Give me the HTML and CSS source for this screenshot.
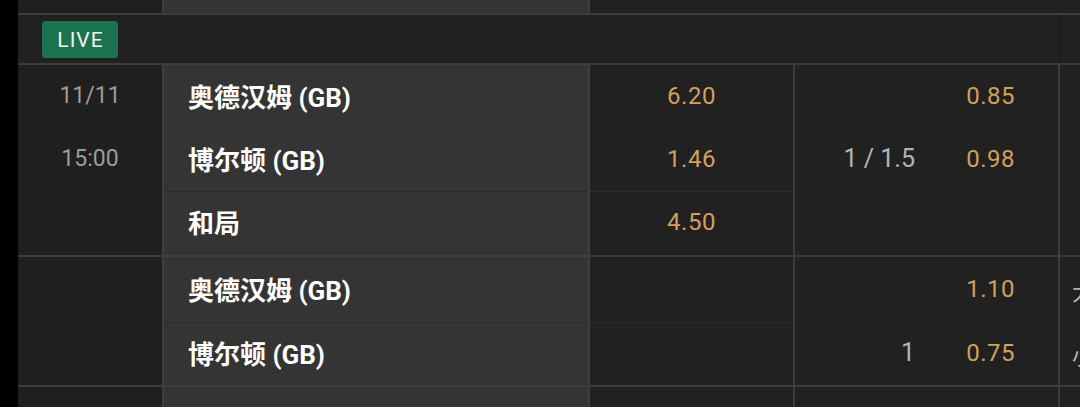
FILE: index.html
```html
<!DOCTYPE html>
<html lang="zh">
<head>
<meta charset="utf-8">
<title>Odds</title>
<link rel="stylesheet" href="styles.css">
</head>
<body>
<div class="page">
  <div class="block top">
    <div class="c-date"></div>
    <div class="c-team"></div>
    <div class="c-odds"></div>
    <div class="c-hcp"></div>
    <div class="c-rest"></div>
  </div>

  <div class="header">
    <span class="live">LIVE</span>
    <div class="hdr-rest"></div>
  </div>

  <div class="block b1">
    <div class="c-date">
      <div class="d-row">11/11</div>
      <div class="d-row">15:00</div>
    </div>
    <div class="c-team">
      <div class="t-row">奥德汉姆 (GB)</div>
      <div class="t-row">博尔顿 (GB)</div>
      <div class="t-row sep">和局</div>
    </div>
    <div class="c-odds">
      <div class="o-row">6.20</div>
      <div class="o-row">1.46</div>
      <div class="o-row sep">4.50</div>
    </div>
    <div class="c-hcp">
      <div class="h-row"><span class="line"></span><span class="price">0.85</span></div>
      <div class="h-row"><span class="line">1 / 1.5</span><span class="price">0.98</span></div>
      <div class="h-row"></div>
    </div>
    <div class="c-rest"></div>
  </div>

  <div class="block b2">
    <div class="c-date">
      <div class="d-row"></div>
      <div class="d-row sep-dark"></div>
    </div>
    <div class="c-team">
      <div class="t-row">奥德汉姆 (GB)</div>
      <div class="t-row sep">博尔顿 (GB)</div>
    </div>
    <div class="c-odds">
      <div class="o-row"></div>
      <div class="o-row sep"></div>
    </div>
    <div class="c-hcp">
      <div class="h-row"><span class="line"></span><span class="price">1.10</span></div>
      <div class="h-row"><span class="line">1</span><span class="price">0.75</span></div>
    </div>
    <div class="c-rest">
      <div class="r-row">大</div>
      <div class="r-row">小</div>
    </div>
  </div>

  <div class="block bottom">
    <div class="c-date"></div>
    <div class="c-team"></div>
    <div class="c-odds"></div>
    <div class="c-hcp"></div>
    <div class="c-rest"></div>
  </div>
</div>
</body>
</html>
```

FILE: styles.css
```css
* { box-sizing: border-box; }

html, body {
  margin: 0;
  padding: 0;
  background: #000;
  height: 407px;
  overflow: hidden;
}

.page {
  margin-left: 18px;
  width: 1062px;
  font-family: Roboto, "Noto Sans CJK SC", sans-serif;
  background: #212121;
}

.block {
  display: grid;
  grid-template-columns: 144px 428px 205px 265px 1fr;
  border-bottom: 2px solid #3c3c3c;
}

.c-date {
  background: #1f1f1f;
}

.c-team {
  background: #343434;
  border-left: 2px solid #3e3e3e;
  border-right: 2px solid #3e3e3e;
}

.c-odds {
  background: #212121;
  border-right: 2px solid #3c3c3c;
}

.c-hcp {
  background: #212121;
  border-right: 2px solid #3c3c3c;
}

.c-rest {
  background: #212121;
  overflow: hidden;
}

.top { height: 15px; }
.top .c-odds, .top .c-hcp { border-right: 0; }

.header {
  height: 50px;
  display: flex;
  align-items: flex-start;
  border-bottom: 2px solid #3c3c3c;
  background: #212121;
}

.live {
  margin: 6px 0 0 24px;
  width: 76px;
  height: 37px;
  border-radius: 4px;
  background: #1c7350;
  color: #f4f4f4;
  font-size: 21px;
  letter-spacing: 1px;
  padding-left: 1px;
  display: flex;
  align-items: center;
  justify-content: center;
}

.hdr-rest {
  margin-left: auto;
  width: 21px;
  height: 48px;
  border-left: 1px solid #1a1a1a;
}

.b1 { height: 192px; }
.b2 { height: 130px; }
.bottom { height: 30px; border-bottom: 0; }

.d-row, .t-row, .o-row, .h-row, .r-row {
  height: 63px;
  display: flex;
  align-items: center;
}

.d-row {
  justify-content: center;
  color: #9c9c9c;
  font-size: 23px;
  padding-bottom: 2px;
}

.t-row {
  padding-left: 24px;
  color: #ffffff;
  font-weight: 700;
  font-size: 26px;
  padding-bottom: 3px;
}

.b2 .t-row:first-child, .b2 .o-row:first-child, .b2 .d-row:first-child, .b2 .h-row:first-child, .b2 .r-row:first-child {
  height: 65px;
}

.sep {
  border-top: 1px solid #2a2a2a;
}

.sep-dark {
  border-top: 1px solid #1a1a1a;
}

.o-row {
  justify-content: center;
  color: #d3a05a;
  font-size: 24px;
  letter-spacing: 0.5px;
  padding-bottom: 2px;
}

.h-row {
  font-size: 24px;
  padding-bottom: 2px;
}

.line {
  width: 120px;
  text-align: right;
  color: #b4b4b4;
  font-size: 25px;
}

.price {
  width: 100px;
  text-align: right;
  color: #d3a05a;
  letter-spacing: 0.5px;
}

.r-row {
  padding-left: 12px;
  color: #b4b4b4;
  font-size: 22px;
  white-space: nowrap;
}
```
